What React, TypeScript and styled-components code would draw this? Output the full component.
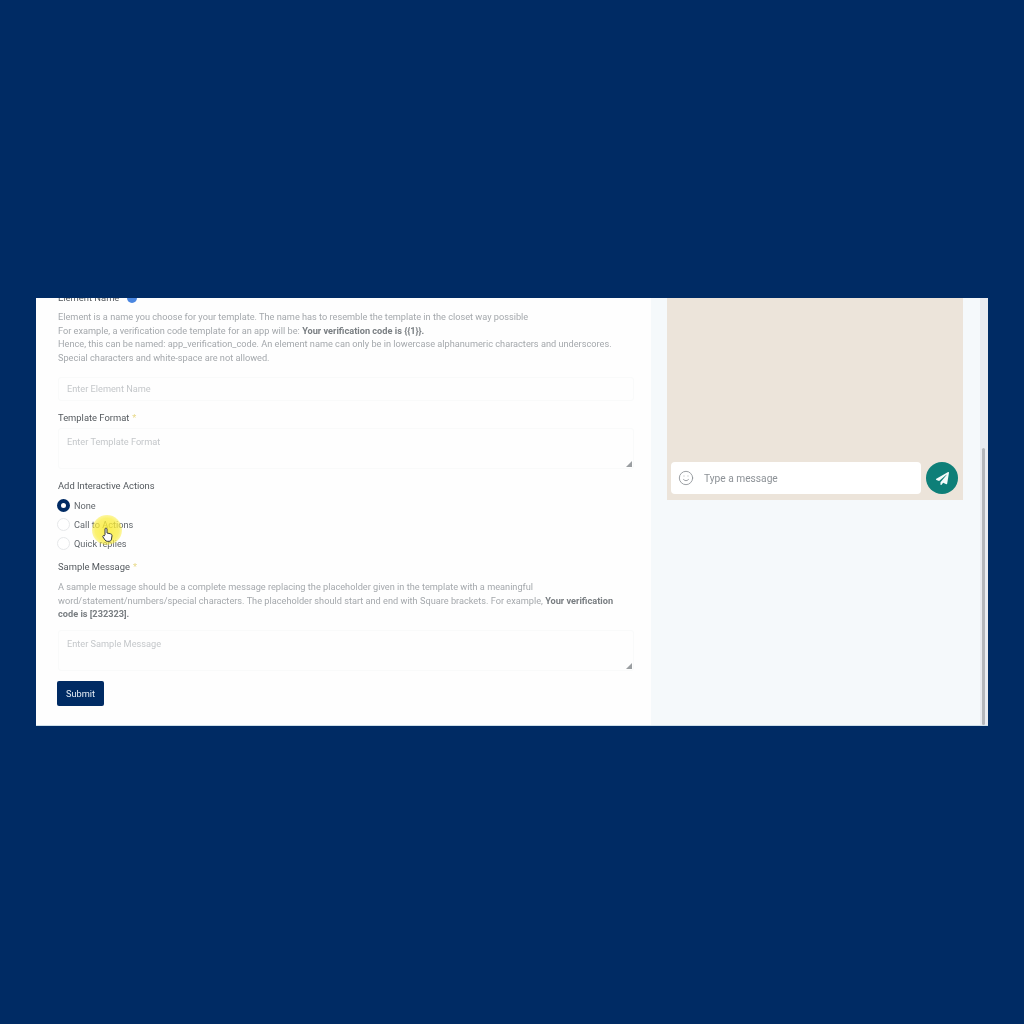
import React from "react";
import styled, { createGlobalStyle } from "styled-components";
import { Smile } from "lucide-react";
import { FaPaperPlane } from "react-icons/fa";

const Global = createGlobalStyle`
  html, body { margin: 0; padding: 0; background: #002b64; }
  body { font-family: Roboto, "Liberation Sans", sans-serif; }
`;

const Page = styled.div`
  width: 1024px;
  height: 1024px;
  box-sizing: border-box;
  padding: 298px 36px 298px 36px;
  background: #002b64;
`;

const Window = styled.div`
  display: flex;
  height: 428px;
  width: 952px;
  overflow: hidden;
  background: #f5f9fb;
  border-bottom: 1px solid #cfe0ea;
  box-sizing: border-box;
  filter: blur(0.5px);
`;

const FormPanel = styled.div`
  position: relative;
  width: 615px;
  flex: none;
  background: #fefefe;
  display: flex;
  flex-direction: column;
  justify-content: flex-end;
  box-sizing: border-box;
  padding: 0 17px 19px 22px;
  overflow: hidden;
  & > * { flex-shrink: 0; }
`;

const Label = styled.div<{ $mt?: number }>`
  display: flex;
  align-items: center;
  font-size: 9.4px;
  line-height: 12px;
  color: #53585d;
  margin-top: ${(p) => p.$mt ?? 0}px;
`;

const Req = styled.span`
  color: #e8d98a;
  margin-left: 3px;
`;

const Info = styled.span`
  width: 10px;
  height: 10px;
  border-radius: 50%;
  background: #4a86e0;
  margin-left: 1px;
`;

const Help = styled.p<{ $mt?: number }>`
  margin: ${(p) => p.$mt ?? 0}px 0 0;
  font-size: 9.2px;
  line-height: 13.6px;
  color: #a4a8ac;
  b { color: #797e82; font-weight: 700; }
`;

const Field = styled.div<{ $h: number; $mt: number; $tall?: boolean }>`
  position: relative;
  height: ${(p) => p.$h}px;
  margin-top: ${(p) => p.$mt}px;
  box-sizing: border-box;
  padding: ${(p) => (p.$tall ? "7px" : "0")} 8px 0;
  display: flex;
  align-items: ${(p) => (p.$tall ? "flex-start" : "center")};
  border: 1px solid #f9fafa;
  border-radius: 3px;
  font-size: 9.2px;
  line-height: 12px;
  color: #c4c7ca;
`;

const Grip = styled.svg`
  position: absolute;
  right: 1px;
  bottom: 1px;
  width: 6px;
  height: 6px;
`;

const Radios = styled.div`
  display: flex;
  flex-direction: column;
  gap: 6.5px;
  margin-top: 8px;
`;

const RadioRow = styled.div`
  display: flex;
  align-items: center;
  gap: 4px;
  height: 12.5px;
  font-size: 9.2px;
  color: #62676c;
`;

const RadioDot = styled.span<{ $on?: boolean }>`
  width: 13px;
  height: 13px;
  margin-left: -1px;
  box-sizing: border-box;
  border-radius: 50%;
  border: ${(p) => (p.$on ? "4px solid #002b64" : "1px solid #e6e8ea")};
  background: #fff;
`;

const SubmitButton = styled.button`
  align-self: flex-start;
  width: 47px;
  height: 25px;
  margin: 10px 0 0 -1px;
  padding: 0;
  border: none;
  border-radius: 2px;
  background: #002b64;
  color: #e6eef6;
  font-family: inherit;
  font-size: 9.2px;
`;

const Highlight = styled.div`
  position: absolute;
  left: 56px;
  top: 217px;
  width: 30px;
  height: 30px;
  border-radius: 50%;
  background: radial-gradient(circle, rgba(250, 236, 50, 0.85) 0%, rgba(250, 236, 50, 0.7) 55%, rgba(250, 236, 50, 0) 100%);
`;

const Cursor = styled.svg`
  position: absolute;
  left: 66px;
  top: 229px;
  width: 11px;
  height: 15px;
`;

const PreviewPanel = styled.div`
  flex: 1;
  display: flex;
  flex-direction: column;
  padding: 0 17px 0 16px;
`;

const Chat = styled.div`
  height: 202px;
  box-sizing: border-box;
  background: #ece4da;
  display: flex;
  flex-direction: column;
  justify-content: flex-end;
  padding: 0 5px 6px 4px;
`;

const Composer = styled.div`
  display: flex;
  align-items: center;
  gap: 5px;
`;

const MessageBox = styled.div`
  flex: 1;
  height: 32px;
  background: #fff;
  border-radius: 4px;
  display: flex;
  align-items: center;
  gap: 10px;
  padding-left: 7px;
  font-size: 10.2px;
  color: #8d9297;
`;

const SendButton = styled.div`
  width: 32px;
  height: 32px;
  border-radius: 50%;
  background: #0e7f78;
  display: flex;
  align-items: center;
  justify-content: center;
  color: #f4fbfa;
`;

const ScrollTrack = styled.div`
  width: 8px;
  flex: none;
  background: #e9ebf0;
  display: flex;
  flex-direction: column;
  justify-content: flex-end;
  padding: 0 3px 0 2px;
  box-sizing: border-box;
`;

const ScrollThumb = styled.div`
  height: 277px;
  background: #b4b6bb;
  border-radius: 2px;
`;

const ResizeGrip = () => (
  <Grip viewBox="0 0 7 7">
    <path d="M7 0 L7 7 L0 7 Z" fill="#9a9ea1" />
  </Grip>
);

export default function App() {
  return (
    <Page>
      <Global />
      <Window>
        <FormPanel>
          <Label>
            Element Name <Req>*</Req>
            <Info />
          </Label>
          <Help $mt={6.4}>
            Element is a name you choose for your template. The name has to resemble the template in the closet way possible
            <br />
            For example, a verification code template for an app will be: <b>Your verification code is {"{{1}}"}.</b>
            <br />
            Hence, this can be named: app_verification_code. An element name can only be in lowercase alphanumeric characters and underscores.
            <br />
            Special characters and white-space are not allowed.
          </Help>
          <Field $h={24} $mt={12.2}>Enter Element Name</Field>
          <Label $mt={11}>
            Template Format <Req>*</Req>
          </Label>
          <Field $h={41} $mt={4.5} $tall>
            Enter Template Format
            <ResizeGrip />
          </Field>
          <Label $mt={10.5}>Add Interactive Actions</Label>
          <Radios>
            <RadioRow>
              <RadioDot $on />
              None
            </RadioRow>
            <RadioRow>
              <RadioDot />
              Call to Actions
            </RadioRow>
            <RadioRow>
              <RadioDot />
              Quick replies
            </RadioRow>
          </Radios>
          <Label $mt={11}>
            Sample Message <Req>*</Req>
          </Label>
          <Help $mt={7}>
            A sample message should be a complete message replacing the placeholder given in the template with a meaningful
            <br />
            word/statement/numbers/special characters. The placeholder should start and end with Square brackets. For example, <b>Your verification</b>
            <br />
            <b>code is [232323].</b>
          </Help>
          <Field $h={41} $mt={9} $tall>
            Enter Sample Message
            <ResizeGrip />
          </Field>
          <SubmitButton>Submit</SubmitButton>
          <Highlight />
          <Cursor viewBox="0 0 11 15">
            <path
              d="M3 7.5 V2 C3 0.7 5 0.7 5 2 V6 L8.5 6.8 C9.6 7 10 7.8 10 8.8 L9.5 12 C9.3 13.5 8.5 14.3 7 14.3 H5.2 C4.2 14.3 3.6 13.8 3 13 L0.9 9.9 C0.3 8.9 1.7 8 2.4 8.8 Z"
              fill="#fdfdfd"
              stroke="#33363a"
              strokeWidth="1"
              strokeLinejoin="round"
            />
          </Cursor>
        </FormPanel>
        <PreviewPanel>
          <Chat>
            <Composer>
              <MessageBox>
                <Smile size={16} strokeWidth={1.3} color="#8d9297" />
                Type a message
              </MessageBox>
              <SendButton>
                <FaPaperPlane size={13} />
              </SendButton>
            </Composer>
          </Chat>
        </PreviewPanel>
        <ScrollTrack>
          <ScrollThumb />
        </ScrollTrack>
      </Window>
    </Page>
  );
}
